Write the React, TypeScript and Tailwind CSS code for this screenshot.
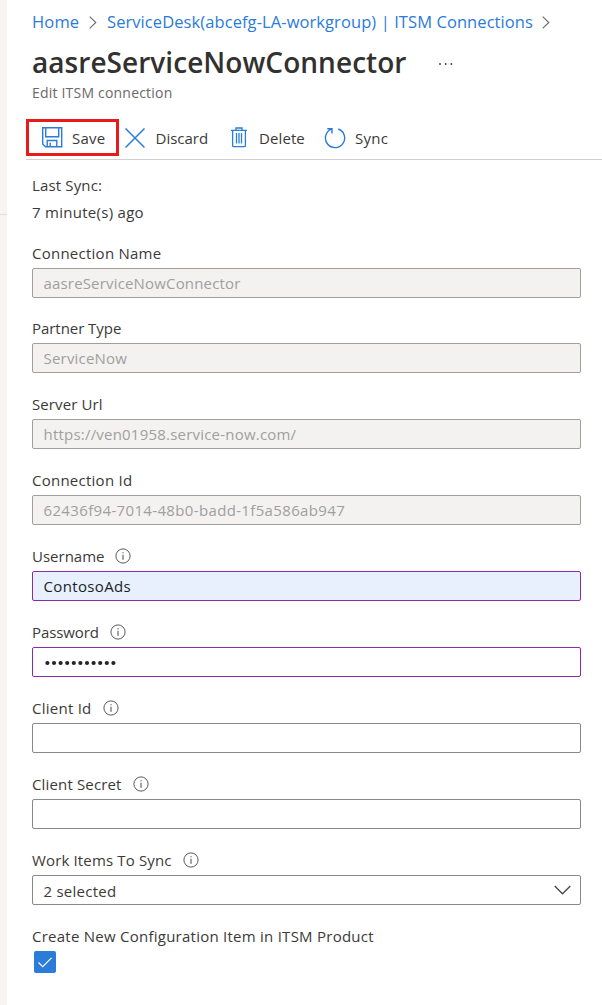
import React from "react";

function InfoIcon() {
  return (
    <svg className="ml-[11px] h-[16px] w-[16px] shrink-0" viewBox="0 0 16 16" fill="none" stroke="#4a4846">
      <circle cx="8" cy="8" r="7.1" strokeWidth="0.9" />
      <path d="M8 6.800v5M8 4.200v1.200" strokeWidth="1" />
    </svg>
  );
}

function Crumb() {
  return (
    <svg className="h-[13px] w-[8px] shrink-0" viewBox="0 0 8 13" fill="none" stroke="#6b6967">
      <path d="M0.7 0.7L6.8 6.5L0.7 12.3" strokeWidth="1.1" />
    </svg>
  );
}

type FieldProps = {
  label: string;
  labelClass?: string;
  box?: string;
  first?: boolean;
  info?: boolean;
  children?: React.ReactNode;
};

function Field({ label, labelClass = "tracking-[0.25px]", box = "border-[#8a8886] bg-white text-[#3b3a39]", first, info, children }: FieldProps) {
  return (
    <div className={first ? "h-[75px]" : "h-[76px]"}>
      <div className="flex h-[25px] items-center pb-[5px]">
        <span className={labelClass}>{label}</span>
        {info && <InfoIcon />}
      </div>
      <div className={`flex h-[30px] w-[549px] items-center rounded-[2px] border px-[10.5px] ${box}`}>{children}</div>
    </div>
  );
}

const disabled = "border-[#a19f9d] bg-[#f3f2f1] text-[#a19f9d]";
const edited = "border-[#8a2da5]";

export default function App() {
  return (
    <div className="flex h-[1005px] w-[602px] overflow-hidden bg-white font-['Open_Sans',sans-serif] text-[15px] leading-[20px] whitespace-nowrap text-[#3b3a39]">
      <div className="w-[7px] shrink-0 bg-[#f6f5f4] pt-[214px]">
        <div className="h-px bg-[#e1dfdd]" />
      </div>
      <div className="min-w-0 flex-1">
        <nav className="mt-[11px] flex h-[22px] items-center pl-[25px] text-[16.5px] text-[#2b7bd9]">
          <span className="w-[57px] tracking-[0.15px]">Home</span>
          <Crumb />
          <span className="ml-[10px] w-[435px] tracking-[0.08px]">ServiceDesk(abcefg-LA-workgroup) | ITSM Connections</span>
          <Crumb />
        </nav>
        <div className="mt-[9px] flex h-[40px] items-center pl-[25px]">
          <h1 className="w-[406px] text-[28px] leading-[40px] font-semibold tracking-[0.05px] text-[#323130]">aasreServiceNowConnector</h1>
          <svg className="mt-[3px] h-[4px] w-[16px]" viewBox="0 0 16 4" fill="#3b3a39">
            <circle cx="2" cy="2" r="0.9" />
            <circle cx="7.7" cy="2" r="0.9" />
            <circle cx="13.4" cy="2" r="0.9" />
          </svg>
        </div>
        <p className="mt-px pl-[25px] text-[14px] tracking-[0.2px] text-[#6b6967]">Edit ITSM connection</p>
        <div className="mt-[16px] ml-[19px] flex h-[41px] items-start border-b border-[#d2d0ce]">
          <button className="flex h-[37px] w-[93px] items-center border-3 border-[#e81b1b] pl-[13px]">
            <svg className="h-[21px] w-[21px]" viewBox="0 0 21 21" fill="none" stroke="#2b7bd9" strokeWidth="1.4">
              <path d="M.7.7h19v19H3.5L.7 17zM3.7.7v9h13v-9M5.2 19.5v-6h9.6v6M8.2 19.5v-3.7" />
            </svg>
            <span className="ml-[9px] tracking-[0.25px]">Save</span>
          </button>
          <button className="flex h-[37px] items-center pl-[6px]">
            <svg className="h-[20px] w-[20px]" viewBox="0 0 20 20" fill="none" stroke="#2b7bd9" strokeWidth="1.5">
              <path d="M.5.5l19 19M19.5.5l-19 19" />
            </svg>
            <span className="ml-[10.5px] w-[74.5px] text-left">Discard</span>
          </button>
          <button className="flex h-[37px] items-center">
            <svg className="h-[21px] w-[18px]" viewBox="0 0 18 21" fill="none" stroke="#2b7bd9" strokeWidth="1.3">
              <path d="M1 3.3h16M6 3V1h6v2M2.6 3.5v15.2q0 1 1 1h10.8q1 0 1-1V3.500M6.500 6v10.500M9 6v10.500M11.500 6v10.500" />
            </svg>
            <span className="ml-[11px] w-[65px] text-left tracking-[0.1px]">Delete</span>
          </button>
          <button className="flex h-[37px] items-center">
            <svg className="h-[22px] w-[22px]" viewBox="0 0 22 22" fill="none" stroke="#2b7bd9" strokeWidth="1.4">
              <path d="M14.300 2A9.600 9.600 0 1 1 7.300 2.200M3.300 1.700H8V6.500" />
            </svg>
            <span className="ml-[9px] tracking-[0.25px]">Sync</span>
          </button>
        </div>
        <main className="pt-[15px] pl-[25px]">
          <p className="tracking-[0.15px]">Last Sync:</p>
          <p className="mt-[7px] mb-[21px] tracking-[0.28px]">7 minute(s) ago</p>
          <Field label="Connection Name" box={`${disabled} tracking-[0.17px]`} first>aasreServiceNowConnector</Field>
          <Field label="Partner Type" labelClass="tracking-[-0.05px]" box={`${disabled} tracking-[0.2px]`}>ServiceNow</Field>
          <Field label="Server Url" labelClass="tracking-[0.1px]" box={`${disabled} tracking-[0.21px]`}>https://ven01958.service-now.com/</Field>
          <Field label="Connection Id" box={`${disabled} tracking-[0.35px]`}>62436f94-7014-48b0-badd-1f5a586ab947</Field>
          <Field label="Username" labelClass="" info box={`${edited} bg-[#e8f0fe] text-[#201f1e] tracking-[0.35px]`}>ContosoAds</Field>
          <Field label="Password" labelClass="tracking-[-0.1px]" info box={`${edited} bg-white`}>
            <svg className="mt-[2px] h-[6px] w-[74px]" viewBox="0 0 74 6" fill="#252423">
              {Array.from({ length: 11 }, (_, i) => (
                <circle key={i} cx={3.4 + i * 6.6} cy="3" r="2.1" />
              ))}
            </svg>
          </Field>
          <Field label="Client Id" info />
          <Field label="Client Secret" labelClass="tracking-[0.15px]" info />
          <Field label="Work Items To Sync" labelClass="tracking-[0.15px]" info>
            <span className="flex-1 pt-[2px] tracking-[0.25px]">2 selected</span>
            <svg className="-mr-px h-[10px] w-[17px]" viewBox="0 0 17 10" fill="none" stroke="#4a4846" strokeWidth="1.3">
              <path d="M.7 1L8.500 8.800L16.300 1" />
            </svg>
          </Field>
          <p className="tracking-[0.25px]">Create New Configuration Item in ITSM Product</p>
          <div className="mt-[5px] ml-[2px] flex h-[22px] w-[22px] items-center justify-center rounded-[2px] bg-[#2b7bd9]">
            <svg className="h-[11px] w-[14px]" viewBox="0 0 14 11" fill="none" stroke="#fff" strokeWidth="1.2">
              <path d="M.5 5.500L4.700 9.700L13.500.8" />
            </svg>
          </div>
        </main>
      </div>
    </div>
  );
}
